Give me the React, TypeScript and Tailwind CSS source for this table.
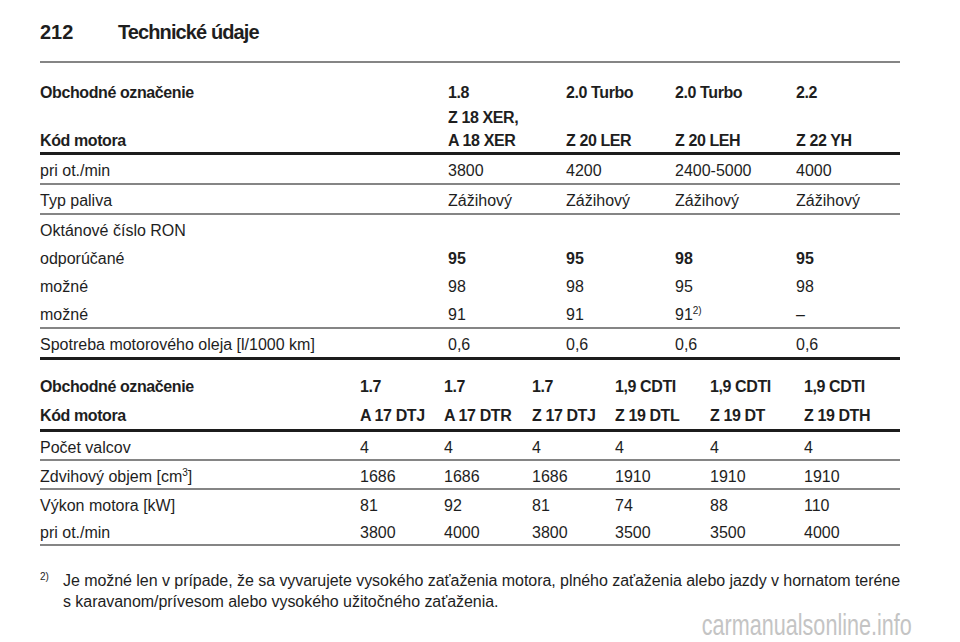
import type { ReactNode } from 'react';

const grid1 = 'grid grid-cols-[408px_118px_109px_121px_104px]';
const grid2 = 'grid grid-cols-[320px_84px_88px_83px_95px_94px_96px]';

const Thin = () => <div className="h-[2px] bg-[#858585]" />;
const Thick = () => <div className="h-[3px] bg-[#1c1c1c]" />;

function Row({ cells, grid, h = 'h-[28px] pt-[2px]', bold = false }: {
  cells: ReactNode[];
  grid: string;
  h?: string;
  bold?: boolean;
}) {
  return (
    <div className={`${grid} ${h} items-center leading-[19px] ${bold ? 'font-bold tracking-[-0.4px]' : ''}`}>
      {cells.map((c, i) => (
        <div key={i} className="whitespace-nowrap">{c}</div>
      ))}
    </div>
  );
}

const Sup = ({ children }: { children: ReactNode }) => (
  <span className="relative -top-[6px] text-[10px] leading-none">{children}</span>
);

export default function App() {
  return (
    <div className="relative w-[960px] h-[642px] overflow-hidden bg-white pl-[40px] pr-[60px] text-[16px] text-[#1e1e1e] font-['Liberation_Sans',Arial,sans-serif]">
      {/* page header */}
      <div className="flex h-[61px] items-center pt-[2px] font-bold text-[20px]">
        <span className="w-[78px]">212</span>
        <span className="tracking-[-0.9px]">Technické údaje</span>
      </div>
      <Thin />

      {/* table 1 */}
      <div className="pt-[20px]">
        <Row grid={grid1} bold h="h-[19px]" cells={['Obchodné označenie', '1.8', '2.0 Turbo', '2.0 Turbo', '2.2']} />
        <div className={`${grid1} mt-[4px] items-end font-bold tracking-[-0.4px] leading-[23px]`}>
          <div>Kód motora</div>
          <div>Z 18 XER,<br />A 18 XER</div>
          <div>Z 20 LER</div>
          <div>Z 20 LEH</div>
          <div>Z 22 YH</div>
        </div>
      </div>
      <Thick />
      <Row grid={grid1} cells={['pri ot./min', '3800', '4200', '2400-5000', '4000']} />
      <Thin />
      <Row grid={grid1} cells={['Typ paliva', 'Zážihový', 'Zážihový', 'Zážihový', 'Zážihový']} />
      <Thin />
      <Row grid={grid1} cells={['Oktánové číslo RON', '', '', '', '']} />
      <Row
        grid={grid1}
        cells={[
          'odporúčané',
          <b key="a">95</b>,
          <b key="b">95</b>,
          <b key="c">98</b>,
          <b key="d">95</b>,
        ]}
      />
      <Row grid={grid1} cells={['možné', '98', '98', '95', '98']} />
      <Row grid={grid1} cells={['možné', '91', '91', <span key="s">91<Sup>2)</Sup></span>, '–']} />
      <Thin />
      <Row grid={grid1} cells={['Spotreba motorového oleja [l/1000 km]', '0,6', '0,6', '0,6', '0,6']} />
      <Thick />

      {/* table 2 */}
      <div className="pt-[17px] pb-[4px]">
        <Row grid={grid2} bold h="h-[19px]" cells={['Obchodné označenie', '1.7', '1.7', '1.7', '1,9 CDTI', '1,9 CDTI', '1,9 CDTI']} />
        <div className="mt-[10px]">
          <Row grid={grid2} bold h="h-[19px]" cells={['Kód motora', 'A 17 DTJ', 'A 17 DTR', 'Z 17 DTJ', 'Z 19 DTL', 'Z 19 DT', 'Z 19 DTH']} />
        </div>
      </div>
      <Thick />
      <Row grid={grid2} h="h-[27px] pt-[3px]" cells={['Počet valcov', '4', '4', '4', '4', '4', '4']} />
      <Thin />
      <Row
        grid={grid2}
        h="h-[27px] pt-[3px]"
        cells={[<span key="z">Zdvihový objem [cm<Sup>3</Sup>]</span>, '1686', '1686', '1686', '1910', '1910', '1910']}
      />
      <Thin />
      <Row grid={grid2} h="h-[27px] pt-[3px]" cells={['Výkon motora [kW]', '81', '92', '81', '74', '88', '110']} />
      <Row grid={grid2} h="h-[27px] pt-[3px]" cells={['pri ot./min', '3800', '4000', '3800', '3500', '3500', '4000']} />
      <Thin />

      {/* footnote */}
      <div className="mt-[24px] flex leading-[21px]">
        <span className="w-[24px] text-[10px] leading-[14px]">2)</span>
        <p className="whitespace-nowrap tracking-[-0.05px]">
          Je možné len v prípade, že sa vyvarujete vysokého zaťaženia motora, plného zaťaženia alebo jazdy v hornatom teréne
          <br />
          s karavanom/prívesom alebo vysokého užitočného zaťaženia.
        </p>
      </div>

      <div className="absolute right-[48px] bottom-[0px] origin-right scale-x-[0.72] text-[30px] leading-[34px] text-[#c4c4c4] whitespace-nowrap">
        carmanualsonline.info
      </div>
    </div>
  );
}
